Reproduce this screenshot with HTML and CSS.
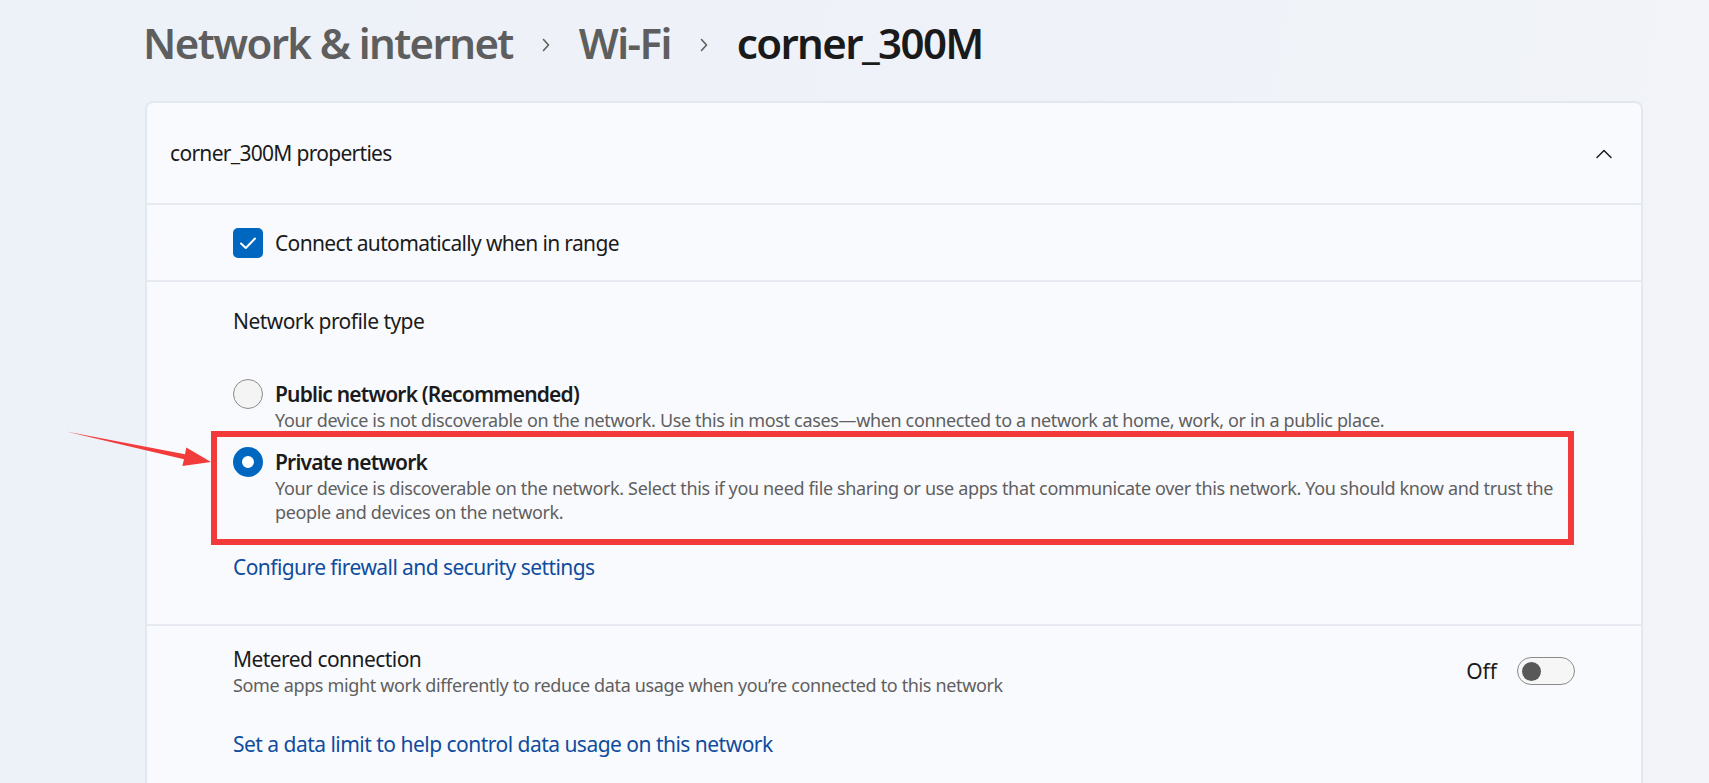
FILE: index.html
```html
<!DOCTYPE html>
<html lang="en">
<head>
<meta charset="utf-8">
<title>corner_300M</title>
<link rel="stylesheet" href="styles.css">
</head>
<body>
<div class="page">
  <header class="crumbs">
    <span class="crumb">Network &amp; internet</span>
    <svg class="crumb-sep" viewBox="0 0 10 14" width="10" height="14"><path d="M2.5 1.5 L7.5 7 L2.5 12.5" fill="none" stroke="#5e5e5e" stroke-width="1.6" stroke-linecap="round" stroke-linejoin="round"/></svg>
    <span class="crumb">Wi-Fi</span>
    <svg class="crumb-sep" viewBox="0 0 10 14" width="10" height="14"><path d="M2.5 1.5 L7.5 7 L2.5 12.5" fill="none" stroke="#5e5e5e" stroke-width="1.6" stroke-linecap="round" stroke-linejoin="round"/></svg>
    <span class="crumb current">corner_300M</span>
  </header>

  <section class="card">
    <div class="card-head">
      <span>corner_300M properties</span>
      <svg class="chev-up" viewBox="0 0 16 10" width="16" height="10"><path d="M1 8.5 L8 1.5 L15 8.5" fill="none" stroke="#1b1b1b" stroke-width="1.5" stroke-linecap="round" stroke-linejoin="round"/></svg>
    </div>

    <div class="row check-row">
      <span class="checkbox"><svg viewBox="0 0 30 30" width="30" height="30"><path d="M8 15.5 L12.8 20 L22 10.5" fill="none" stroke="#ffffff" stroke-width="2" stroke-linecap="round" stroke-linejoin="round"/></svg></span>
      <span>Connect automatically when in range</span>
    </div>

    <div class="row profile">
      <div class="label">Network profile type</div>
      <div class="options">
        <div class="option">
          <span class="radio"></span>
          <div class="opt-text">
            <div class="opt-title">Public network (Recommended)</div>
            <div class="desc">Your device is not discoverable on the network. Use this in most cases—when connected to a network at home, work, or in a public place.</div>
          </div>
        </div>
        <div class="option selected">
          <span class="radio on"></span>
          <div class="opt-text">
            <div class="opt-title">Private network</div>
            <div class="desc">Your device is discoverable on the network. Select this if you need file sharing or use apps that communicate over this network. You should know and trust the people and devices on the network.</div>
          </div>
        </div>
      </div>
      <a class="link" href="#">Configure firewall and security settings</a>
    </div>

    <div class="row metered">
      <div class="metered-top">
        <div>
          <div class="label">Metered connection</div>
          <div class="desc">Some apps might work differently to reduce data usage when you’re connected to this network</div>
        </div>
        <div class="toggle-wrap">
          <span>Off</span>
          <span class="toggle"><span class="knob"></span></span>
        </div>
      </div>
      <a class="link data-link" href="#">Set a data limit to help control data usage on this network</a>
    </div>
  </section>
</div>

<svg class="annot" width="1709" height="783" viewBox="0 0 1709 783">
  <polygon points="66,431.5 185,454.2 186.3,447.6 211,462 182.4,466 184,459.3" fill="#f23b3b"/>
</svg>
</body>
</html>
```

FILE: styles.css
```css
* { box-sizing: border-box; }

html, body { margin: 0; }

body {
  width: 1709px;
  height: 783px;
  overflow: hidden;
  position: relative;
  background: linear-gradient(100deg, #edf1f8 0%, #eff2f8 60%, #f2f4f9 100%);
  font-family: "Noto Sans", "Segoe UI", sans-serif;
  color: #1b1b1b;
}

.page {
  padding: 14px 66px 0 145px;
}

.crumbs {
  display: flex;
  align-items: center;
  gap: 28px;
  height: 56px;
  margin-left: -2px;
  font-size: 42px;
  font-weight: 600;
  letter-spacing: -1.6px;
  color: #5e5e5e;
}

.crumbs .current { color: #1a1a1a; }

.crumb-sep { flex: none; margin-top: 6px; }

.card {
  margin-top: 31px;
  height: 720px;
  background: #f9fafd;
  border: 2px solid #e3e7ee;
  border-bottom: none;
  border-radius: 8px 8px 0 0;
}

.card-head {
  height: 100px;
  display: flex;
  align-items: center;
  justify-content: space-between;
  padding: 0 29px 0 23px;
  font-size: 21px;
  letter-spacing: -0.7px;
}

.chev-up { margin-top: 2px; }

.row {
  border-top: 2px solid #e7ebf1;
  padding-left: 86px;
  padding-right: 66px;
}

.check-row {
  height: 77px;
  display: flex;
  align-items: center;
  gap: 12px;
  font-size: 21px;
  letter-spacing: -0.65px;
}

.checkbox {
  width: 30px;
  height: 30px;
  border-radius: 5px;
  background: #0067c0;
  display: flex;
  flex: none;
}

.profile {
  padding-top: 25px;
  padding-bottom: 43px;
}

.label {
  font-size: 21px;
  line-height: 28px;
  letter-spacing: -0.55px;
}

.options {
  margin-top: 45px;
  display: flex;
  flex-direction: column;
  gap: 16px;
}

.option {
  position: relative;
  display: flex;
  gap: 12px;
}

.option.selected::after {
  content: "";
  position: absolute;
  left: -22px;
  top: -17px;
  right: 1px;
  bottom: -21px;
  border: 6px solid #f33a3a;
  pointer-events: none;
}

.radio {
  flex: none;
  width: 30px;
  height: 30px;
  margin-top: -1px;
  border-radius: 50%;
  border: 1.5px solid #8a8a8a;
  background: #f4f4f5;
}

.radio.on {
  border: 9px solid #0067c0;
  background: #ffffff;
}

.opt-title {
  font-size: 21px;
  font-weight: 600;
  line-height: 28px;
  letter-spacing: -0.8px;
}

.desc {
  font-size: 18px;
  line-height: 24px;
  color: #5f5f5f;
  letter-spacing: -0.35px;
}

.link {
  display: block;
  margin-top: 29px;
  font-size: 21px;
  line-height: 28px;
  color: #0f4c9e;
  text-decoration: none;
  letter-spacing: -0.57px;
}

.metered { padding-top: 19px; }

.metered-top {
  display: flex;
  align-items: center;
  justify-content: space-between;
}

.toggle-wrap {
  display: flex;
  align-items: center;
  gap: 20px;
  font-size: 21px;
}

.toggle {
  width: 58px;
  height: 28px;
  border: 1.5px solid #8b8b8b;
  border-radius: 14px;
  background: #f6f6f7;
  display: flex;
  align-items: center;
  padding-left: 3.5px;
}

.knob {
  width: 19px;
  height: 19px;
  border-radius: 50%;
  background: #585858;
}

.data-link {
  margin-top: 33px;
  letter-spacing: -0.52px;
}

.annot {
  position: absolute;
  left: 0;
  top: 0;
  pointer-events: none;
}
```
